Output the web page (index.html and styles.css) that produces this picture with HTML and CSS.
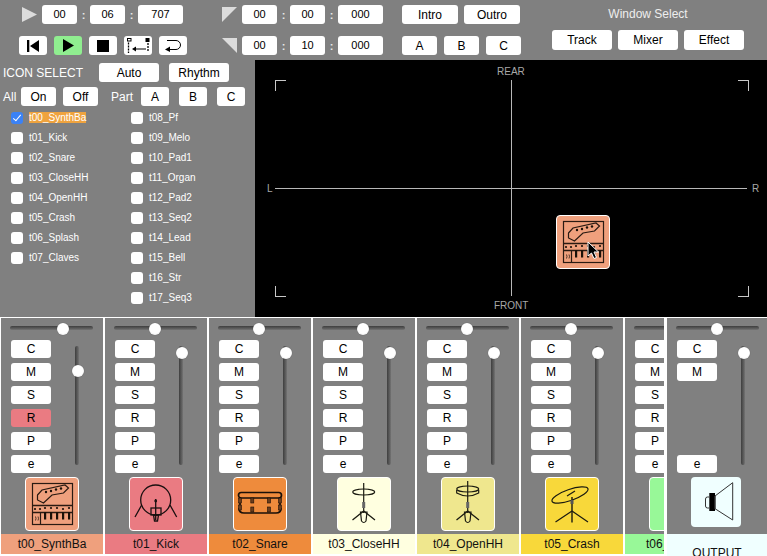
FILE: index.html
```html
<!DOCTYPE html>
<html lang="en">
<head>
<meta charset="utf-8">
<title>Mixer</title>
<link rel="stylesheet" href="styles.css">
</head>
<body>
<svg class="defs" width="0" height="0" aria-hidden="true">
  <defs>
    <symbol id="i-synth" viewBox="0 0 54 54">
      <g fill="none" stroke="#2a1a12" stroke-width="1.200">
        <rect x="7.500" y="6.500" width="40" height="41"/>
        <path d="M12.500 18 L17 13 L40 8 L43.500 11 L38.500 16 L27 18 L18.500 26 L12.500 23 Z"/>
        <path d="M7.500 28.500 H47.500 M7.500 35.500 H47.500" stroke-width="1.600"/>
        <path d="M15.500 36 V47.500"/>
        <path d="M10.500 39.500 q1 2 0 4 M13 39.500 q1 2 0 4" stroke-width=".8"/>
      </g>
      <g fill="#1a1008">
        <circle cx="21" cy="15" r="1.200"/><circle cx="26" cy="14" r="1.200"/><circle cx="31" cy="12.500" r="1.200"/><circle cx="36" cy="11.500" r="1.200"/>
        <circle cx="10" cy="32" r="1.100"/><circle cx="15" cy="32" r="1.100"/><circle cx="20" cy="31" r="1.100"/><circle cx="26" cy="31" r="1.100"/><circle cx="32" cy="31" r="1.100"/><circle cx="38" cy="32" r="1.100"/><circle cx="44" cy="31" r="1.100"/>
        <rect x="19" y="35" width="2.200" height="7.500"/><rect x="25" y="35" width="2.200" height="7.500"/><rect x="31" y="35" width="2.200" height="7.500"/><rect x="37" y="35" width="2.200" height="7.500"/><rect x="43" y="35" width="2.200" height="7.500"/>
      </g>
    </symbol>
    <symbol id="i-kick" viewBox="0 0 54 54">
      <g fill="none" stroke="#1a1010" stroke-width="1.300">
        <circle cx="26.700" cy="23" r="15"/>
        <path d="M12.700 28 L6 40 M41 28 L47.700 40"/>
        <path d="M26.700 22 V43"/>
        <rect x="22" y="31" width="10" height="7"/>
        <path d="M24.500 38 h5 l-1 6 h-3 z"/>
      </g>
      <circle cx="26.700" cy="24" r="1.400" fill="#1a1010"/>
    </symbol>
    <symbol id="i-snare" viewBox="0 0 54 54">
      <g fill="none" stroke="#1a1008" stroke-width="1.700">
        <rect x="5.500" y="15.500" width="43" height="5.500" rx="2.700"/>
        <path d="M6 31 Q6 36 11 36 H43 Q48 36 48 31"/>
        <path d="M7 20 V32 M47 20 V32"/>
      </g>
      <g fill="#6b3d1c" stroke="#1a1008" stroke-width=".6">
        <rect x="5.500" y="21" width="3" height="5"/><rect x="5.500" y="28" width="3" height="5"/>
        <rect x="17.800" y="21" width="3" height="5"/><rect x="17.800" y="30" width="3" height="5"/>
        <rect x="34.500" y="21" width="3" height="5"/><rect x="34.500" y="30" width="3" height="5"/>
        <rect x="45.500" y="21" width="3" height="5"/><rect x="45.500" y="28" width="3" height="5"/>
      </g>
    </symbol>
    <symbol id="i-close" viewBox="0 0 54 54">
      <g fill="none" stroke="#1a1a10" stroke-width="1.200">
        <ellipse cx="26.700" cy="15" rx="11" ry="3"/>
        <path d="M26.700 6 V36"/>
        <path d="M26.700 34 L15.500 43 M26.700 34 L38 43" stroke-width="1.300"/>
        <path d="M23.500 35 h6.500 l-1 9 q-2.200 3 -4.500 0 z"/>
      </g>
      <rect x="25.200" y="25" width="3" height="6" fill="#666"/>
    </symbol>
    <symbol id="i-open" viewBox="0 0 54 54">
      <g fill="none" stroke="#1a1a10" stroke-width="1.200">
        <ellipse cx="26.700" cy="12" rx="11" ry="3"/>
        <path d="M15.700 13 v3 q11 6 22 0 v-3"/>
        <path d="M26.700 4 V36"/>
        <path d="M26.700 34 L15.500 43 M26.700 34 L38 43" stroke-width="1.300"/>
        <path d="M23.500 35 h6.500 l-1 9 q-2.200 3 -4.500 0 z"/>
      </g>
      <rect x="25.200" y="25" width="3" height="6" fill="#666"/>
    </symbol>
    <symbol id="i-crash" viewBox="0 0 54 54">
      <g fill="none" stroke="#1a1a10" stroke-width="1.200">
        <ellipse cx="25" cy="18" rx="19" ry="5.500" transform="rotate(-19 25 18)"/>
        <path d="M27 20 V45.500" stroke-width="1.400"/>
        <path d="M27 34 L10.500 45 M27 34 L43 45"/>
        <path d="M22 19 L30 14"/>
      </g>
      <rect x="25.500" y="23" width="3" height="4" fill="#555"/>
    </symbol>
    <symbol id="i-speaker" viewBox="0 0 50 50">
      <rect x="18.300" y="16" width="5.700" height="18" fill="#000"/>
      <g fill="none" stroke="#333" stroke-width="1">
        <path d="M18 20 h-1.500 q-2 0 -2 2 v7 q0 2 2 2 h1.500"/>
        <path d="M24 19 L41.700 5.700 V43 L24 31.700 Z"/>
        <path d="M24 19 V32"/>
      </g>
    </symbol>
  </defs>
</svg>

<main class="app">
  <section class="top">
    <header class="header">
      <div class="transport">
        <div class="time-row play-time">
          <svg class="tri" width="15" height="15" viewBox="0 0 15 15"><path d="M0 0 L15 7.500 L0 15 Z"/></svg>
          <span class="field">00</span><span class="colon">:</span><span class="field">06</span><span class="colon">:</span><span class="field wide">707</span>
        </div>
        <div class="buttons-row">
          <button class="btn tbtn"><svg width="12" height="12" viewBox="0 0 12 12"><path d="M0 0 H2.300 V12 H0 Z M12 0 V12 L3 6 Z"/></svg></button>
          <button class="btn tbtn on"><svg width="11" height="13" viewBox="0 0 11 13"><path d="M0 0 L11 6.500 L0 13 Z"/></svg></button>
          <button class="btn tbtn"><svg width="12" height="12" viewBox="0 0 12 12"><rect width="12" height="12"/></svg></button>
          <button class="btn tbtn"><svg width="23" height="15" viewBox="0 0 23 15"><rect x=".5" y=".5" width="3.500" height="2.500" fill="#fff" stroke="#000"/><rect x="18.500" y="0" width="4" height="4"/><path d="M1.500 4.500 V15 M21 5 V14" stroke="#000" stroke-width="1.300" stroke-dasharray="2 1" fill="none"/><path d="M5 11 L9 8.500 V10.500 H19 V11.500 H9 V13.500 Z"/></svg></button>
          <button class="btn tbtn"><svg width="17" height="12" viewBox="0 0 17 12"><path d="M2 .5 H11 A4.500 4.500 0 0 1 11 9.500 H4" fill="none" stroke="#000"/><path d="M0 9.500 L5 6.500 V12 Z"/></svg></button>
        </div>
      </div>
      <div class="marks">
        <div class="time-row">
          <svg class="tri" width="15" height="15" viewBox="0 0 15 15"><path d="M0 0 H15 L0 15 Z"/></svg>
          <span class="field">00</span><span class="colon">:</span><span class="field">00</span><span class="colon">:</span><span class="field wide">000</span>
        </div>
        <div class="time-row second">
          <svg class="tri" width="15" height="15" viewBox="0 0 15 15"><path d="M0 0 H15 V15 Z"/></svg>
          <span class="field">00</span><span class="colon">:</span><span class="field">10</span><span class="colon">:</span><span class="field wide">000</span>
        </div>
      </div>
      <div class="sections">
        <div class="sec-row">
          <button class="btn intro">Intro</button>
          <button class="btn intro">Outro</button>
        </div>
        <div class="sec-row spaced">
          <button class="btn abc">A</button>
          <button class="btn abc">B</button>
          <button class="btn abc">C</button>
        </div>
      </div>
      <div class="window">
        <div class="window-title">Window Select</div>
        <div class="window-row">
          <button class="btn win">Track</button>
          <button class="btn win">Mixer</button>
          <button class="btn win">Effect</button>
        </div>
      </div>
    </header>

    <div class="work">
      <aside class="panel">
        <div class="icon-row">
          <span class="icon-title">ICON SELECT</span>
          <button class="btn pick">Auto</button>
          <button class="btn pick">Rhythm</button>
        </div>
        <div class="all-row">
          <span class="all-label">All</span>
          <button class="btn onoff">On</button>
          <button class="btn onoff">Off</button>
          <span class="part-label">Part</span>
          <button class="btn part">A</button>
          <button class="btn part">B</button>
          <button class="btn part">C</button>
        </div>
        <div class="tracks">
          <label class="track"><input type="checkbox" checked><span class="sel">t00_SynthBa</span></label>
          <label class="track"><input type="checkbox"><span>t01_Kick</span></label>
          <label class="track"><input type="checkbox"><span>t02_Snare</span></label>
          <label class="track"><input type="checkbox"><span>t03_CloseHH</span></label>
          <label class="track"><input type="checkbox"><span>t04_OpenHH</span></label>
          <label class="track"><input type="checkbox"><span>t05_Crash</span></label>
          <label class="track"><input type="checkbox"><span>t06_Splash</span></label>
          <label class="track"><input type="checkbox"><span>t07_Claves</span></label>
          <span class="track"></span>
          <span class="track"></span>
          <label class="track"><input type="checkbox"><span>t08_Pf</span></label>
          <label class="track"><input type="checkbox"><span>t09_Melo</span></label>
          <label class="track"><input type="checkbox"><span>t10_Pad1</span></label>
          <label class="track"><input type="checkbox"><span>t11_Organ</span></label>
          <label class="track"><input type="checkbox"><span>t12_Pad2</span></label>
          <label class="track"><input type="checkbox"><span>t13_Seq2</span></label>
          <label class="track"><input type="checkbox"><span>t14_Lead</span></label>
          <label class="track"><input type="checkbox"><span>t15_Bell</span></label>
          <label class="track"><input type="checkbox"><span>t16_Str</span></label>
          <label class="track"><input type="checkbox"><span>t17_Seq3</span></label>
        </div>
      </aside>

      <div class="stage">
        <span class="stage-label rear">REAR</span>
        <span class="stage-label front">FRONT</span>
        <span class="stage-label left">L</span>
        <span class="stage-label right">R</span>
        <i class="axis h"></i>
        <i class="axis v"></i>
        <i class="corner tl"></i>
        <i class="corner tr"></i>
        <i class="corner bl"></i>
        <i class="corner br"></i>
        <div class="tile stage-tile c0"><svg class="glyph"><use href="#i-synth"/></svg></div>
        <svg class="cursor" width="13" height="19" viewBox="0 0 13 19"><path d="M1 1 V15 L4.500 12 L7 17.500 L9.500 16.500 L7 11 H11.500 Z" fill="#000" stroke="#fff" stroke-width="1"/></svg>
      </div>
    </div>
  </section>

  <section class="mixer">
    <article class="strip">
      <div class="pan"><i class="knob first"></i></div>
      <div class="controls">
        <div class="keys"><button class="btn key">C</button><button class="btn key">M</button><button class="btn key">S</button><button class="btn key rec">R</button><button class="btn key">P</button><button class="btn key">e</button></div>
        <div class="fader"><i class="knob low"></i></div>
      </div>
      <div class="tile c0"><svg class="glyph"><use href="#i-synth"/></svg></div>
      <div class="name c0">t00_SynthBa</div>
    </article>
    <article class="strip">
      <div class="pan"><i class="knob"></i></div>
      <div class="controls">
        <div class="keys"><button class="btn key">C</button><button class="btn key">M</button><button class="btn key">S</button><button class="btn key">R</button><button class="btn key">P</button><button class="btn key">e</button></div>
        <div class="fader"><i class="knob"></i></div>
      </div>
      <div class="tile c1"><svg class="glyph"><use href="#i-kick"/></svg></div>
      <div class="name c1">t01_Kick</div>
    </article>
    <article class="strip">
      <div class="pan"><i class="knob"></i></div>
      <div class="controls">
        <div class="keys"><button class="btn key">C</button><button class="btn key">M</button><button class="btn key">S</button><button class="btn key">R</button><button class="btn key">P</button><button class="btn key">e</button></div>
        <div class="fader"><i class="knob"></i></div>
      </div>
      <div class="tile c2"><svg class="glyph"><use href="#i-snare"/></svg></div>
      <div class="name c2">t02_Snare</div>
    </article>
    <article class="strip">
      <div class="pan"><i class="knob"></i></div>
      <div class="controls">
        <div class="keys"><button class="btn key">C</button><button class="btn key">M</button><button class="btn key">S</button><button class="btn key">R</button><button class="btn key">P</button><button class="btn key">e</button></div>
        <div class="fader"><i class="knob"></i></div>
      </div>
      <div class="tile c3"><svg class="glyph"><use href="#i-close"/></svg></div>
      <div class="name c3">t03_CloseHH</div>
    </article>
    <article class="strip">
      <div class="pan"><i class="knob"></i></div>
      <div class="controls">
        <div class="keys"><button class="btn key">C</button><button class="btn key">M</button><button class="btn key">S</button><button class="btn key">R</button><button class="btn key">P</button><button class="btn key">e</button></div>
        <div class="fader"><i class="knob"></i></div>
      </div>
      <div class="tile c4"><svg class="glyph"><use href="#i-open"/></svg></div>
      <div class="name c4">t04_OpenHH</div>
    </article>
    <article class="strip">
      <div class="pan"><i class="knob"></i></div>
      <div class="controls">
        <div class="keys"><button class="btn key">C</button><button class="btn key">M</button><button class="btn key">S</button><button class="btn key">R</button><button class="btn key">P</button><button class="btn key">e</button></div>
        <div class="fader"><i class="knob"></i></div>
      </div>
      <div class="tile c5"><svg class="glyph"><use href="#i-crash"/></svg></div>
      <div class="name c5">t05_Crash</div>
    </article>
    <div class="clip">
      <article class="strip">
        <div class="pan"></div>
        <div class="controls">
          <div class="keys"><button class="btn key">C</button><button class="btn key">M</button><button class="btn key">S</button><button class="btn key">R</button><button class="btn key">P</button><button class="btn key">e</button></div>
        </div>
        <div class="tile c6"></div>
        <div class="name c6">t06_Splash</div>
      </article>
    </div>
    <article class="strip output">
      <div class="pan"><i class="knob"></i></div>
      <div class="controls">
        <div class="keys"><button class="btn key">C</button><button class="btn key">M</button><span class="key blank"></span><span class="key blank"></span><span class="key blank"></span><button class="btn key">e</button></div>
        <div class="fader"><i class="knob"></i></div>
      </div>
      <div class="speaker"><svg class="speaker-glyph"><use href="#i-speaker"/></svg></div>
      <div class="name out">OUTPUT</div>
    </article>
  </section>
</main>
</body>
</html>
```

FILE: styles.css
```css
* { box-sizing: border-box; }

html, body {
  margin: 0;
  height: 556px;
  overflow: hidden;
  background: #fff;
  font-family: "Liberation Sans", Arial, sans-serif;
}

.defs { position: absolute; }

.app { width: 767px; height: 556px; overflow: hidden; }

.top { height: 317px; background: #808080; }

.btn {
  margin: 0;
  padding: 0;
  border: 0;
  border-radius: 3px;
  background: #fff;
  color: #000;
  font: 12px "Liberation Sans", Arial, sans-serif;
  display: flex;
  align-items: center;
  justify-content: center;
}

/* header */
.header { height: 60px; display: flex; padding-top: 5px; }

.transport { width: 222px; }

.time-row { display: flex; align-items: center; height: 19px; }
.time-row.second { margin-top: 12px; }
.play-time { padding-left: 22px; }

.tri { fill: #dcdcdc; margin-right: 5px; flex: none; }

.field {
  width: 35px;
  height: 19px;
  border-radius: 3px;
  background: #fff;
  color: #000;
  font-size: 11px;
  line-height: 18px;
  text-align: center;
}
.field.wide { width: 45px; }

.colon {
  width: 13px;
  color: #e8e8e8;
  font-size: 11px;
  font-weight: bold;
  text-align: center;
}

.buttons-row { display: flex; gap: 7px; margin-top: 12px; padding-left: 19px; }

.tbtn { width: 28px; height: 19px; }
.tbtn.on { background: #90ee90; }

.marks { width: 180px; }

.sections { width: 150px; }
.sec-row { display: flex; gap: 6px; }
.sec-row.spaced { gap: 7px; margin-top: 12px; }
.intro { width: 56px; height: 19px; }
.abc { width: 35px; height: 19px; }

.window { width: 192px; }
.window-title {
  height: 25px;
  color: #eee;
  font-size: 12px;
  line-height: 19px;
  text-align: center;
}
.window-row { display: flex; gap: 6px; }
.win { width: 60px; height: 20px; }

/* left panel */
.work { display: flex; height: 257px; }

.panel { width: 255px; padding-top: 3px; color: #fff; font-size: 12px; }

.icon-row, .all-row { display: flex; align-items: center; padding-left: 3px; height: 19px; }
.all-row { margin-top: 5px; }

.icon-title { width: 96px; }
.pick { width: 60px; height: 19px; margin-right: 10px; }

.all-label { width: 18px; }
.onoff { width: 35px; height: 19px; margin-right: 7px; }
.part-label { width: 30px; margin-left: 6px; }
.part { width: 28px; height: 19px; margin-right: 10px; }

.tracks {
  display: grid;
  grid-auto-flow: column;
  grid-template-rows: repeat(10, 20px);
  grid-template-columns: 120px 120px;
  margin-top: 2px;
  padding-left: 11px;
}

.track { display: flex; align-items: center; gap: 6px; font-size: 10px; color: #fff; }
.track span { margin-bottom: 2px; }

.track input {
  appearance: none;
  -webkit-appearance: none;
  position: relative;
  flex: none;
  width: 12px;
  height: 12px;
  margin: 0;
  border-radius: 3px;
  background: #fff;
}
.track input:checked { background: #3b82f6; }
.track input:checked::after {
  content: "";
  position: absolute;
  left: 4px;
  top: 1px;
  width: 3px;
  height: 7px;
  border: solid #fff;
  border-width: 0 1.5px 1.5px 0;
  transform: rotate(40deg);
}

.sel { background: #efa33e; }

/* stage */
.stage { position: relative; width: 512px; height: 257px; background: #000; }

.stage-label { position: absolute; color: #a8a8a8; font-size: 10px; line-height: 10px; }
.rear { left: 242px; top: 7px; }
.front { left: 239px; top: 241px; }
.left { left: 12px; top: 124px; }
.right { left: 497px; top: 124px; }

.axis { position: absolute; background: #b8b8b8; }
.axis.h { left: 20px; top: 128px; width: 472px; height: 1px; }
.axis.v { left: 256px; top: 20px; width: 1px; height: 216px; }

.corner { position: absolute; width: 11px; height: 11px; border: 0 solid #c8c8c8; }
.tl { left: 20px; top: 20px; border-width: 1px 0 0 1px; }
.tr { left: 483px; top: 20px; border-width: 1px 1px 0 0; }
.bl { left: 20px; top: 226px; border-width: 0 0 1px 1px; }
.br { left: 483px; top: 226px; border-width: 0 1px 1px 0; }

.cursor { position: absolute; left: 332px; top: 181px; }

/* mixer */
.mixer {
  display: flex;
  gap: 2px;
  height: 239px;
  padding: 1px 0 0 1px;
  background: #fff;
}

.strip { flex: none; width: 102px; height: 236px; background: #808080; }

.clip { display: flex; flex: none; width: 39px; overflow: hidden; height: 236px; }

.pan {
  position: relative;
  width: 83px;
  height: 4px;
  margin: 8px 0 0 9px;
  border-radius: 2px;
  background: linear-gradient(#3e3e3e, #5c5c5c 60%, #747474);
}

.knob {
  position: absolute;
  width: 12px;
  height: 12px;
  border-radius: 50%;
  background: radial-gradient(circle at 50% 45%, #fff 55%, #d8d8d8);
  box-shadow: 0 0 1px rgba(0, 0, 0, .4);
}
.pan .knob { left: 35px; top: -3px; }
.pan .knob.first { left: 47px; }

.controls { display: flex; height: 133px; margin-top: 10px; padding-left: 10px; }

.keys { width: 40px; display: flex; flex-direction: column; gap: 5px; }

.key { height: 18px; flex: none; font-size: 12px; }
.rec { background: #ea7b82; }
.blank { display: block; }

.fader {
  position: relative;
  width: 4px;
  height: 119px;
  margin: 6px 0 0 24px;
  background: linear-gradient(90deg, #3e3e3e, #5c5c5c 60%, #747474);
  border-radius: 2px;
}
.fader .knob { left: -3px; top: 1px; }
.fader .knob.low { top: 19px; }

.tile {
  width: 54px;
  height: 54px;
  margin: 4px 0 0 24px;
  border: 1.5px solid #fff;
  border-radius: 4px;
}

.stage .stage-tile { position: absolute; left: 301px; top: 155px; margin: 0; }

.glyph { display: block; width: 54px; height: 54px; margin: -1.5px; }

.name {
  height: 20px;
  margin-top: 3px;
  color: #111;
  font-size: 12px;
  line-height: 21px;
  text-align: center;
  white-space: nowrap;
}

.c0 { background: #efa07d; }
.c1 { background: #ea7b82; }
.c2 { background: #ee8b3c; }
.c3 { background: #ffffe0; }
.c4 { background: #efe78e; }
.c5 { background: #f8d83a; }
.c6 { background: #98f898; }

.output { width: 100px; height: 238px; margin-left: 1px; }

.speaker {
  width: 50px;
  height: 50px;
  margin: 4px 0 0 24px;
  border-radius: 4px;
  background: #f0ffff;
}
.speaker-glyph { display: block; width: 50px; height: 50px; }

.name.out {
  height: 22px;
  margin-top: 7px;
  padding-top: 12px;
  overflow: hidden;
  background: #f0ffff;
  line-height: 14px;
}
```
